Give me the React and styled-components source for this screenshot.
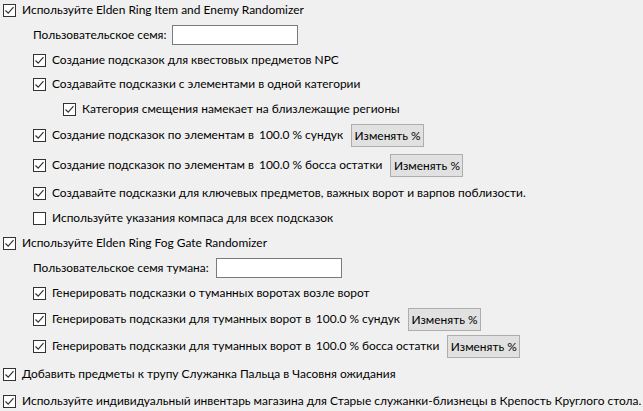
import React from "react";
import styled, { createGlobalStyle } from "styled-components";

const Global = createGlobalStyle`
  html, body { margin: 0; padding: 0; background: #f0f0f0; }
  body { font-family: "Lato", "Segoe UI", sans-serif; font-size: 11.95px; color: #000; }
`;

const Panel = styled.div`
  width: 643px;
  height: 411px;
  background: #f0f0f0;
  display: flex;
  flex-direction: column;
  overflow: hidden;
`;

const Row = styled.div`
  display: flex;
  align-items: center;
  height: 20px;
  margin-top: ${(p) => p.$gap || 0}px;
  padding-left: ${(p) => p.$indent || 0}px;
  white-space: nowrap;
`;

const Box = styled.span`
  width: 13px;
  height: 13px;
  box-sizing: border-box;
  border: 1px solid #333;
  background: #fff;
  display: inline-flex;
  align-items: center;
  justify-content: center;
  flex: none;
  margin-right: 6px;
`;

const Label = styled.span`
  line-height: 20px;
`;

const Num = styled.span`
  margin: 0 3px 0 5px;
`;

const Input = styled.div`
  width: 126px;
  height: 20px;
  box-sizing: border-box;
  border: 1px solid #7a7a7a;
  background: #fff;
  margin-left: ${(p) => p.$ml || 6}px;
`;

const Button = styled.div`
  width: 73px;
  height: 23px;
  box-sizing: border-box;
  border: 1px solid #adadad;
  background: #e1e1e1;
  display: flex;
  align-items: center;
  justify-content: center;
  margin-left: ${(p) => p.$ml || 8}px;
`;

const Check = ({ on }) => (
  <Box>
    {on && (
      <svg width="11" height="11" viewBox="0 0 11 11">
        <path d="M1.5 5.5 L4.2 8.2 L9.5 2.2" fill="none" stroke="#333" strokeWidth="1.2" />
      </svg>
    )}
  </Box>
);

const CheckRow = ({ on = true, indent, gap, children }) => (
  <Row $indent={indent} $gap={gap}>
    <Check on={on} />
    {children}
  </Row>
);

export default function App() {
  return (
    <Panel>
      <Global />
      <CheckRow indent={3} gap={0}>
        <Label>Используйте Elden Ring Item and Enemy Randomizer</Label>
      </CheckRow>
      <Row $indent={33} $gap={5}>
        <Label>Пользовательское семя:</Label>
        <Input />
      </Row>
      <CheckRow indent={33} gap={5}>
        <Label>Создание подсказок для квестовых предметов NPC</Label>
      </CheckRow>
      <CheckRow indent={33} gap={4}>
        <Label>Создавайте подсказки с элементами в одной категории</Label>
      </CheckRow>
      <CheckRow indent={63} gap={5}>
        <Label>Категория смещения намекает на близлежащие регионы</Label>
      </CheckRow>
      <CheckRow indent={33} gap={6}>
        <Label>Создание подсказок по элементам в<Num>100.0</Num>% сундук</Label>
        <Button>Изменять %</Button>
      </CheckRow>
      <CheckRow indent={33} gap={10}>
        <Label>Создание подсказок по элементам в<Num>100.0</Num>% босса остатки</Label>
        <Button>Изменять %</Button>
      </CheckRow>
      <CheckRow indent={33} gap={8}>
        <Label>Создавайте подсказки для ключевых предметов, важных ворот и варпов поблизости.</Label>
      </CheckRow>
      <CheckRow on={false} indent={33} gap={5}>
        <Label>Используйте указания компаса для всех подсказок</Label>
      </CheckRow>
      <CheckRow indent={3} gap={5}>
        <Label>Используйте Elden Ring Fog Gate Randomizer</Label>
      </CheckRow>
      <Row $indent={33} $gap={5}>
        <Label>Пользовательское семя тумана:</Label>
        <Input $ml={7} />
      </Row>
      <CheckRow indent={33} gap={5}>
        <Label>Генерировать подсказки о туманных воротах возле ворот</Label>
      </CheckRow>
      <CheckRow indent={33} gap={6}>
        <Label>Генерировать подсказки для туманных ворот в<Num>100.0</Num>% сундук</Label>
        <Button>Изменять %</Button>
      </CheckRow>
      <CheckRow indent={33} gap={7}>
        <Label>Генерировать подсказки для туманных ворот в<Num>100.0</Num>% босса остатки</Label>
        <Button>Изменять %</Button>
      </CheckRow>
      <CheckRow indent={3} gap={8}>
        <Label>Добавить предметы к трупу Служанка Пальца в Часовня ожидания</Label>
      </CheckRow>
      <CheckRow indent={3} gap={7}>
        <Label>Используйте индивидуальный инвентарь магазина для Старые служанки-близнецы в Крепость Круглого стола.</Label>
      </CheckRow>
    </Panel>
  );
}
